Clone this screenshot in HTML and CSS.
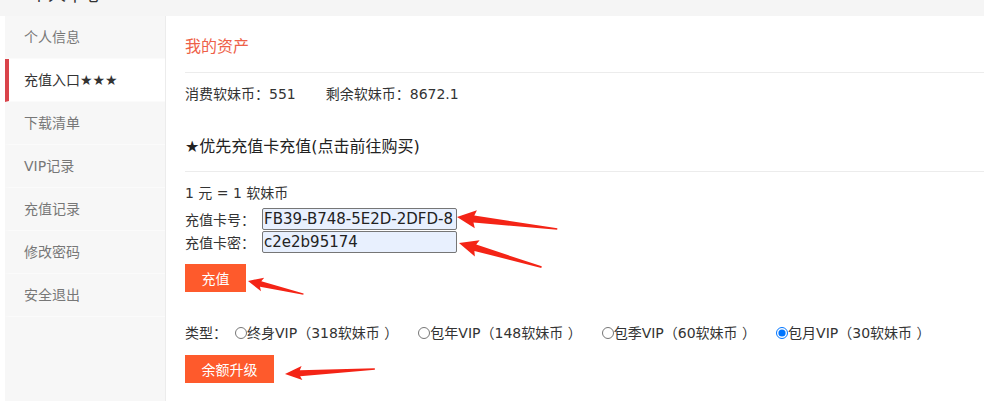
FILE: index.html
```html
<!DOCTYPE html>
<html lang="zh-CN">
<head>
    <meta charset="UTF-8">
    <title>个人中心</title>
    <link rel="stylesheet" href="styles.css">
</head>
<body>
    <div class="topbar">
        <div class="topbar-title">个人中心</div>
    </div>

    <div class="layout">
        <ul class="side-menu">
            <li>个人信息</li>
            <li class="active">充值入口★★★</li>
            <li>下载清单</li>
            <li>VIP记录</li>
            <li>充值记录</li>
            <li>修改密码</li>
            <li>安全退出</li>
        </ul>

        <div class="content">
            <h2 class="title">我的资产</h2>
            <div class="stats">
                <span>消费软妹币：551</span>
                <span>剩余软妹币：8672.1</span>
            </div>

            <h3 class="sub-title">★优先充值卡充值(点击前往购买)</h3>
            <div class="rate">1 元 = 1 软妹币</div>
            <div class="card-form">
                <div class="field">
                    <label for="cardNo">充值卡号：</label>
                    <input type="text" id="cardNo" value="FB39-B748-5E2D-2DFD-8">
                </div>
                <div class="field">
                    <label for="cardPwd">充值卡密：</label>
                    <input type="text" id="cardPwd" value="c2e2b95174">
                </div>
            </div>
            <button class="btn">充值</button>

            <div class="types">
                <span>类型：</span>
                <label class="opt"><input type="radio" name="vip">终身VIP（318软妹币 ）</label>
                <label class="opt"><input type="radio" name="vip">包年VIP（148软妹币 ）</label>
                <label class="opt"><input type="radio" name="vip">包季VIP（60软妹币 ）</label>
                <label class="opt"><input type="radio" name="vip" checked>包月VIP（30软妹币 ）</label>
            </div>
            <button class="btn btn-wide">余额升级</button>
        </div>
    </div>

    <!-- red annotation arrows drawn over the screenshot -->
    <svg class="marks" width="984" height="401" viewBox="0 0 984 401">
        <g fill="#f42416">
            <polygon transform="translate(457 217) rotate(6.8)" points="0,0 19,-9 17,-3.5 101,-0.8 101,0.8 17,3.5 19,9"/>
            <polygon transform="translate(459 243) rotate(16.3)" points="0,0 19,-8.5 17,-3.3 86,-0.8 86,0.8 17,3.3 19,8.5"/>
            <polygon transform="translate(248 281) rotate(13.3)" points="0,0 15,-7 13,-2.8 57,-0.7 57,0.7 13,2.8 15,7"/>
            <polygon transform="translate(285 374) rotate(-3.2)" points="0,0 17,-7 15,-3 90,-0.8 90,0.8 15,3 17,7"/>
        </g>
    </svg>
</body>
</html>
```

FILE: styles.css
```css
* {
    margin: 0;
    padding: 0;
    box-sizing: border-box;
}

body {
    font-family: "DejaVu Sans", "Noto Sans CJK SC", sans-serif;
    font-size: 14px;
    color: #333;
    background: #fff;
    height: 401px;
    overflow: hidden;
}

.topbar {
    height: 16px;
    background: #f5f5f5;
    overflow: hidden;
}

.topbar-title {
    margin: -15px 0 0 30px;
    font-size: 18px;
    line-height: 20px;
    color: #333;
}

.layout {
    display: flex;
    height: 385px;
    padding-left: 5px;
}

.side-menu {
    list-style: none;
    width: 161px;
    flex-shrink: 0;
    background: #f7f7f7;
    border-right: 1px solid #ececec;
}

.side-menu li {
    height: 43px;
    line-height: 42px;
    padding-left: 15px;
    color: #777;
    border-bottom: 1px solid #fbfbfb;
    border-left: 4px solid transparent;
}

.side-menu li.active {
    background: #fff;
    color: #333;
    border-left-color: #d9434a;
}

.content {
    flex: 1;
    padding-left: 19px;
}

.title {
    font-size: 16px;
    font-weight: normal;
    line-height: 24px;
    color: #ee6148;
    padding: 19px 0 13px;
    border-bottom: 1px solid #ececec;
}

.stats {
    margin-top: 11px;
    line-height: 20px;
    display: flex;
    gap: 30px;
}

.sub-title {
    margin-top: 31px;
    font-size: 16px;
    font-weight: normal;
    line-height: 24px;
    color: #222;
    padding-bottom: 12px;
    border-bottom: 1px solid #ececec;
}

.rate {
    margin-top: 11px;
    line-height: 20px;
}

.card-form {
    margin-top: 4px;
}

.field {
    display: flex;
    align-items: center;
    height: 23px;
}

.field label {
    width: 77px;
}

.field input {
    width: 195px;
    height: 22px;
    border: 1px solid #767676;
    border-radius: 2px;
    background: #e8f0fe;
    font-family: inherit;
    font-size: 15px;
    color: #222;
    padding: 0 1px;
}

.btn {
    display: block;
    margin-top: 11px;
    width: 61px;
    height: 28px;
    border: none;
    background: #fe5a2c;
    color: #fff;
    font-family: inherit;
    font-size: 14px;
}

.btn-wide {
    width: 89px;
    margin-top: 12px;
}

.types {
    margin-top: 31px;
    line-height: 20px;
    display: flex;
    align-items: center;
}

.types > span {
    width: 50px;
}

.opt {
    display: flex;
    align-items: center;
    margin-right: 20px;
    white-space: nowrap;
}

.opt input {
    margin: 0;
    width: 12px;
    height: 12px;
}

.marks {
    position: absolute;
    left: 0;
    top: 0;
    pointer-events: none;
}
```
